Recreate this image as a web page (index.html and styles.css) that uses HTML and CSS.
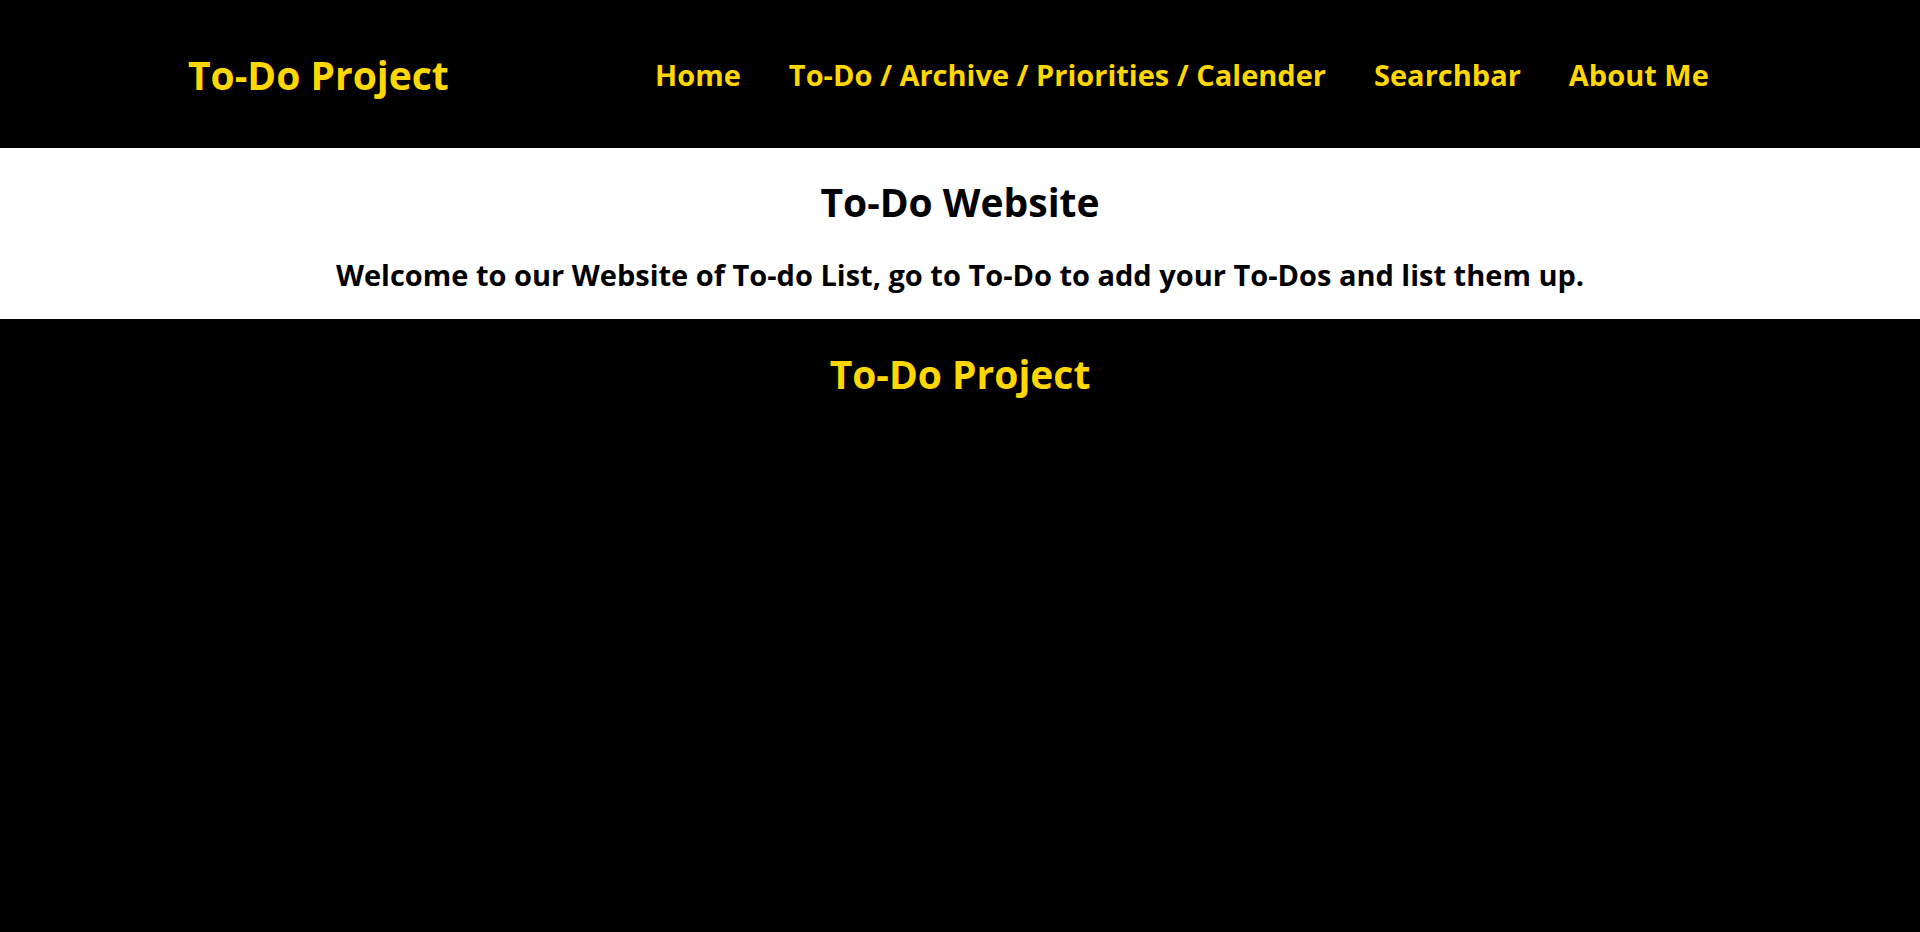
FILE: index.html
```
<!DOCTYPE html>
<html lang="en">
<head>
<meta charset="utf-8">
<title>To-Do Project</title>
<link rel="stylesheet" href="styles.css">
</head>
<body>
<header class="header">
  <h1 class="title">To-Do Project</h1>
  <nav class="nav">
    <a href="#home">Home</a>
    <a href="#todo">To-Do / Archive / Priorities / Calender</a>
    <a href="#search">Searchbar</a>
    <a href="#about">About Me</a>
  </nav>
</header>
<main class="main">
  <h2 class="title">To-Do Website</h2>
  <p class="welcome">Welcome to our Website of To-do List, go to To-Do to add your To-Dos and list them up.</p>
</main>
<footer class="footer">
  <h2 class="title">To-Do Project</h2>
</footer>
</body>
</html>
```
FILE: styles.css
```
* { box-sizing: border-box; }
body {
  margin: 0;
  min-height: 100vh;
  background: #000;
  color: gold;
  font-family: "Segoe UI", "Open Sans", "Noto Sans", sans-serif;
  font-weight: 700;
}
.title { margin: 0; font-size: 39px; line-height: 52px; font-weight: 700; }
.header {
  display: flex;
  align-items: center;
  justify-content: space-between;
  padding: 49px 11% 47px 188px;
}
.nav { display: flex; gap: 48px; font-size: 29px; line-height: 40px; }
.nav a { color: inherit; text-decoration: none; }
.main { padding: 28px 0 24px; background: #fff; color: #000; text-align: center; }
.welcome { margin: 27px 0 0; font-size: 29px; line-height: 40px; }
.footer { padding: 29px 0; text-align: center; }
```
